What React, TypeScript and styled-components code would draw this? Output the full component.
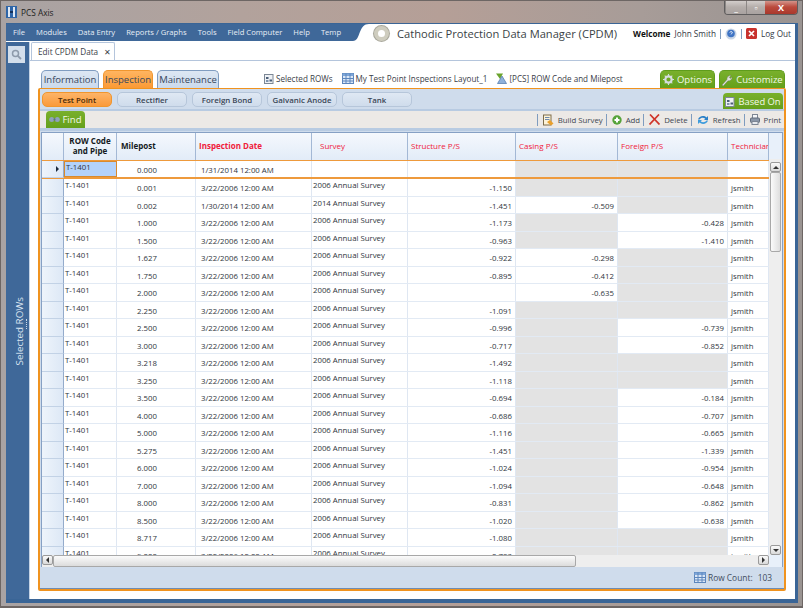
import React from 'react';
import styled, { createGlobalStyle } from 'styled-components';

const GlobalStyle = createGlobalStyle`
  html, body { margin: 0; padding: 0; background: #8f827e; }
  body { font-family: "Open Sans", "Noto Sans", sans-serif; color: #2b3440; }
`;

const Win = styled.div`
  width: 803px;
  height: 608px;
  box-sizing: border-box;
  padding: 0 4px 3px 5px;
  display: flex;
  flex-direction: column;
  overflow: hidden;
  background: linear-gradient(90deg, #a9a3a3 0%, #b2a29c 30%, #b59f97 55%, #a79c98 80%, #9a9492 100%);
  border: 1px solid #6d6664;
  border-bottom-width: 2px;
`;

const TitleBar = styled.div`
  height: 22px;
  flex: none;
  display: flex;
  align-items: center;
  font-size: 8.3px;
  color: #1d1d1d;
  gap: 4px;
  position: relative;
`;

const WinButtons = styled.div`
  position: absolute;
  right: 0;
  top: -1px;
  display: flex;
  height: 14px;
  border: 1px solid #5f5d5e;
  border-top: 0;
  border-radius: 0 0 4px 4px;
  overflow: hidden;
`;

const WinButton = styled.div<{ $w: number; $close?: boolean }>`
  width: ${p => p.$w}px;
  display: flex;
  align-items: center;
  justify-content: center;
  color: #fff;
  font-size: 9px;
  font-weight: 700;
  background: ${p => p.$close
    ? 'linear-gradient(#d8a097, #bb4a3c 50%, #a9382c)'
    : 'linear-gradient(#d7d2d0, #b5aeab 50%, #a9a2a0)'};
  border-left: ${p => p.$close ? 0 : '1px solid #8c8785'};
`;

const Frame = styled.div`
  flex: 1;
  min-height: 0;
  display: flex;
  flex-direction: column;
  background: #fff;
  border: 1px solid #3a6596;
  border-width: 1px 3px 4px 0;
`;

const HeaderBar = styled.div`
  height: 17px;
  flex: none;
  display: flex;
`;

const MenuBar = styled.div`
  width: 347px;
  flex: none;
  background: #3f6899;
  display: flex;
  align-items: center;
  padding-left: 7px;
  padding-bottom: 2px;
  box-sizing: border-box;
  gap: 11px;
  color: #e8eef6;
  font-size: 7.65px;
  white-space: nowrap;
`;

const Brand = styled.div`
  flex: 1;
  display: flex;
  align-items: center;
  background: #fff;
  position: relative;
  height: 19px;
`;

const Gear = styled.div`
  width: 15px;
  height: 15px;
  margin-left: 5px;
  flex: none;
  box-sizing: border-box;
  border-radius: 50%;
  border: 4px solid #cfcdbf;
  background: #fff;
  box-shadow: 0 0 0 1px #a9a89c;
`;

const AppTitle = styled.div`
  margin-left: 8px;
  font-size: 11.15px;
  color: #3a3f45;
  white-space: nowrap;
`;

const UserArea = styled.div`
  margin-left: auto;
  margin-right: 4px;
  display: flex;
  align-items: center;
  gap: 4px;
  font-size: 8.2px;
  white-space: nowrap;
  color: #33383f;
`;

const Welcome = styled.b`
  color: #111;
  margin-right: 2px;
`;

const Pipe = styled.span`
  width: 1px;
  height: 10px;
  background: #7f9cbf;
`;

const Body = styled.div`
  flex: 1;
  min-height: 0;
  display: flex;
`;

const SideBar = styled.div`
  width: 24px;
  flex: none;
  margin-top: 1px;
  background: #3f6899;
  border-right: 1px solid #c5d3e5;
  box-sizing: border-box;
  display: flex;
  flex-direction: column;
  align-items: center;
  position: relative;
`;

const SearchBox = styled.div`
  width: 17px;
  height: 17px;
  margin: 4px 2px 0 0;
  background: #d3deeb;
  display: flex;
  align-items: center;
  justify-content: center;
`;

const SideLabel = styled.div`
  position: absolute;
  left: 7px;
  top: 255px;
  writing-mode: vertical-rl;
  transform: rotate(180deg);
  color: #dbe5f1;
  font-size: 9.8px;
  white-space: nowrap;
`;

const SideDots = styled.div`
  position: absolute;
  left: 20px;
  top: 277px;
  height: 10px;
  border-left: 1px dotted #cdd9e8;
`;

const Content = styled.div`
  flex: 1;
  min-width: 0;
  display: flex;
  flex-direction: column;
`;

const DocTabs = styled.div`
  height: 18px;
  flex: none;
  margin-top: 1px;
  border-bottom: 1px solid #b4c5dc;
`;

const DocTab = styled.div`
  width: 84px;
  height: 18px;
  margin-left: 1px;
  box-sizing: border-box;
  padding-left: 6px;
  display: flex;
  align-items: center;
  gap: 6px;
  background: #fff;
  border: 1px solid #b4c5dc;
  border-bottom: 0;
  border-radius: 2px 2px 0 0;
  font-size: 8.2px;
  color: #3a4048;
`;

const TopRow = styled.div`
  height: 18px;
  margin: 9px 10px 0 11px;
  flex: none;
  display: flex;
  align-items: flex-end;
`;

const MainTab = styled.div<{ $w: number; $state?: 'on' | 'green' }>`
  width: ${p => p.$w}px;
  height: 18px;
  margin-right: 4px;
  box-sizing: border-box;
  display: flex;
  align-items: center;
  justify-content: center;
  gap: 3px;
  font-size: 9.5px;
  border-radius: 5px 5px 0 0;
  white-space: nowrap;
  border: 1px solid ${p => p.$state === 'on' ? '#f0962e' : p.$state === 'green' ? '#5f9c1c' : '#7f9cc0'};
  border-bottom: 0;
  color: ${p => p.$state === 'green' ? '#f2f8e8' : '#37475c'};
  background: ${p => p.$state === 'on'
    ? 'linear-gradient(#ffb561, #fb9a35)'
    : p.$state === 'green'
      ? 'linear-gradient(#79b02c, #65a01b)'
      : 'linear-gradient(#dde7f3, #cbdaec)'};
`;

const Crumbs = styled.div`
  margin-left: 41px;
  height: 17px;
  align-self: flex-start;
  display: flex;
  align-items: center;
  font-size: 8.1px;
  color: #3a4048;
  white-space: nowrap;
`;

const Crumb = styled.span`
  display: inline-flex;
  align-items: center;
  gap: 2px;
  margin-right: 9px;
`;

const TopRight = styled.div`
  margin-left: auto;
  display: flex;
  margin-right: -4px;
`;

const Panel = styled.div`
  flex: 1;
  min-height: 0;
  margin: 0 9px 8px 8px;
  border: 1px solid #f0931f;
  border-width: 1px 2px 2px 2px;
  border-radius: 2px;
  background: #cfdcec;
  display: flex;
  flex-direction: column;
  box-sizing: border-box;
`;

const SubBar = styled.div`
  height: 22px;
  box-sizing: border-box;
  flex: none;
  display: flex;
  align-items: flex-end;
  padding-left: 2px;
  gap: 5px;
  position: relative;
  border-bottom: 2px solid #b8cbe2;
`;

const SubTab = styled.div<{ $on?: boolean }>`
  width: 70px;
  height: 15px;
  margin-bottom: 2px;
  box-sizing: border-box;
  display: flex;
  align-items: center;
  justify-content: center;
  font-size: 7.9px;
  font-weight: 600;
  color: ${p => p.$on ? '#4a2a08' : '#3a4656'};
  border-radius: 5px;
  border: 1px solid ${p => p.$on ? '#f0962e' : '#b6c6da'};
  background: ${p => p.$on ? 'linear-gradient(#fdb468, #fa9a3a)' : 'linear-gradient(#dfe8f3, #cfdcec)'};
`;

const BasedOn = styled.div`
  margin-left: auto;
  margin-right: 1px;
  width: 60px;
  height: 16px;
  box-sizing: border-box;
  display: flex;
  align-items: center;
  justify-content: center;
  gap: 3px;
  border-radius: 4px 4px 0 0;
  background: linear-gradient(#79b02c, #65a01b);
  color: #f2f8e8;
  font-size: 9.4px;
`;

const ToolBar = styled.div`
  height: 20px;
  box-sizing: border-box;
  flex: none;
  display: flex;
  align-items: flex-end;
  background: #ece9e6;
  padding: 0 0 0 6px;
  border-bottom: 3px solid #b8cbe2;
  font-size: 7.8px;
  color: #3e4650;
`;

const FindTab = styled.div`
  width: 39px;
  height: 17px;
  box-sizing: border-box;
  display: flex;
  align-items: center;
  justify-content: center;
  gap: 2px;
  border-radius: 4px 4px 0 0;
  background: linear-gradient(#79b02c, #65a01b);
  color: #f2f8e8;
  font-size: 9.6px;
`;

const Actions = styled.div`
  margin-left: auto;
  height: 17px;
  display: flex;
  align-items: center;
`;

const Action = styled.div`
  display: flex;
  align-items: center;
  gap: 4px;
  height: 12px;
  padding: 0 3px 0 5px;
  border-left: 1px solid #7f9cbf;
  white-space: nowrap;
`;

const GridWrap = styled.div`
  margin: 1px 1px 0 1px;
  flex: none;
  border: 1px solid #86a0c4;
  border-bottom: 0;
  background: #e8f0fa;
`;

const Main = styled.div`
  display: flex;
  height: 422px;
`;

const Rows = styled.div`
  width: 727px;
  flex: none;
  overflow: hidden;
`;

const columns = '22px 53px 79px 116px 96px 108px 102px 110px 41px';

const HeadRow = styled.div`
  display: grid;
  grid-template-columns: ${columns};
  height: 26.5px;
  background: linear-gradient(#f5f8fd, #e2ecf8);
  box-sizing: border-box;
`;

const HeadCell = styled.div<{ $req?: boolean; $strong?: boolean; $center?: boolean; $pad?: number }>`
  display: flex;
  align-items: center;
  box-sizing: border-box;
  overflow: hidden;
  white-space: ${p => p.$center ? 'normal' : 'nowrap'};
  justify-content: ${p => p.$center ? 'center' : 'flex-start'};
  text-align: ${p => p.$center ? 'center' : 'left'};
  line-height: 10.5px;
  padding-left: ${p => p.$pad ?? 3}px;
  font-size: 8px;
  font-weight: ${p => (p.$req && !p.$strong) ? 500 : 700};
  color: ${p => p.$req ? '#f0203a' : '#141a22'};
  border-right: 1px solid #a3b8d5;
`;

const DataRow = styled.div<{ $sel?: boolean }>`
  display: grid;
  grid-template-columns: ${columns};
  height: ${p => p.$sel ? 19.5 : 17.5}px;
  box-sizing: border-box;
  background: #fff;
  font-size: 7.8px;
  color: #2f353c;
  border-top: ${p => p.$sel ? '1px solid #ee9a3c' : 0};
  border-bottom: ${p => p.$sel ? '2px solid #ee9a3c' : '1px solid #e2eaf4'};
`;

const RowHead = styled.div`
  background: linear-gradient(90deg, #eef4fb, #dde8f6);
  border-right: 1px solid #94abcb;
  border-bottom: 1px solid #c2d2e6;
  display: flex;
  align-items: center;
  justify-content: flex-end;
  padding-right: 4px;
  margin-bottom: -1px;
`;

const Arrow = styled.span`
  width: 0;
  height: 0;
  border-left: 3px solid #1c2a3c;
  border-top: 3px solid transparent;
  border-bottom: 3px solid transparent;
`;

const Cell = styled.div<{ $align?: 'left' | 'right'; $top?: boolean; $grey?: boolean; $current?: boolean; $pad?: number }>`
  box-sizing: border-box;
  overflow: hidden;
  white-space: nowrap;
  padding: ${p => p.$top ? '1px 1px 0 1px' : `4px 3px 0 ${p.$pad ?? 3}px`};
  line-height: 11px;
  text-align: ${p => p.$align ?? 'left'};
  border-right: 1px solid #dfe7f2;
  background: ${p => p.$grey ? '#e3e3e3' : p.$current ? '#b3d2fb' : 'transparent'};
  ${p => p.$current ? 'border: 1.5px solid #d98a2e; padding: 0 1px;' : ''}
`;

const VScroll = styled.div`
  width: 13px;
  flex: none;
  background: #eeeeee;
  margin-top: 26px;
  padding-top: 3px;
  box-sizing: border-box;
  display: flex;
  flex-direction: column;
  align-items: center;
`;

const ScrollBtn = styled.div`
  width: 11px;
  height: 10px;
  flex: none;
  box-sizing: border-box;
  border: 1px solid #9a9a9a;
  border-radius: 2px;
  background: linear-gradient(#fafafa, #d9d9d9);
  display: flex;
  align-items: center;
  justify-content: center;
`;

const VThumb = styled.div`
  width: 11px;
  height: 80px;
  flex: none;
  box-sizing: border-box;
  border: 1px solid #a8a8a8;
  border-radius: 2px;
  background: linear-gradient(90deg, #fbfbfb, #dedede);
`;

const VSpacer = styled.div`
  flex: 1;
`;

const HScroll = styled.div`
  display: flex;
  align-items: stretch;
  height: 12px;
`;

const HTrack = styled.div`
  width: 727px;
  display: flex;
  background: #eeeeee;
  align-items: stretch;
`;

const HThumb = styled.div`
  width: 523px;
  box-sizing: border-box;
  border: 1px solid #a8a8a8;
  border-radius: 2px;
  background: linear-gradient(#fbfbfb, #dcdcdc);
`;

const HSpace = styled.div`
  flex: 1;
`;

const Status = styled.div`
  flex: 1;
  min-height: 0;
  display: flex;
  align-items: center;
  justify-content: flex-end;
  gap: 2px;
  padding-right: 12px;
  font-size: 8.4px;
  color: #3f4c5e;
  border-bottom: 1px solid #6f8db4;
`;

const CountText = styled.span`
  margin-right: 3px;
`;

const TriLeft = styled.span`
  border-right: 3px solid #333;
  border-top: 3px solid transparent;
  border-bottom: 3px solid transparent;
`;

const TriRight = styled.span`
  border-left: 3px solid #333;
  border-top: 3px solid transparent;
  border-bottom: 3px solid transparent;
`;

const TriUp = styled.span`
  border-bottom: 3px solid #333;
  border-left: 3px solid transparent;
  border-right: 3px solid transparent;
`;

const TriDown = styled.span`
  border-top: 3px solid #333;
  border-left: 3px solid transparent;
  border-right: 3px solid transparent;
`;

const GridIcon = () => (
  <svg width="12" height="11" viewBox="0 0 12 11">
    <rect x="0.5" y="0.5" width="11" height="10" fill="#dbe7f6" stroke="#5c86bd" />
    <rect x="0.5" y="0.5" width="11" height="2.5" fill="#7ea6d8" />
    <path d="M0.5 5.5h11M0.5 8h11M4 0.5v10M8 0.5v10" stroke="#5c86bd" fill="none" />
  </svg>
);

const PagesIcon = () => (
  <svg width="10" height="11" viewBox="0 0 10 11">
    <rect x="0.5" y="1.5" width="8.5" height="9" fill="#eef1f5" stroke="#7c8795" />
    <rect x="2" y="4" width="2.5" height="2" fill="#4b5f78" />
    <rect x="5.5" y="6.5" width="2.5" height="2" fill="#4b5f78" />
    <rect x="2" y="7" width="2.5" height="2" fill="#7f93ab" />
  </svg>
);

const FilterIcon = () => (
  <svg width="11" height="11" viewBox="0 0 11 11">
    <path d="M0 0.5h7L4 6z" fill="#6aa32d" />
    <path d="M6 3l4.5 7.5h-9z" fill="#8fb1da" stroke="#4d77aa" strokeWidth="0.7" />
  </svg>
);

const BuildIcon = () => (
  <svg width="11" height="12" viewBox="0 0 11 12">
    <rect x="0.5" y="1" width="7.5" height="10" fill="#fdf3d8" stroke="#7c6c4a" />
    <path d="M2 3.5h4.5M2 5.5h4.5" stroke="#6e89ad" />
    <path d="M4 8l3-2 3.5 3.5-2.5 2z" fill="#e9a02c" />
  </svg>
);

const AddIcon = () => (
  <svg width="10" height="10" viewBox="0 0 10 10">
    <circle cx="5" cy="5" r="4.7" fill="#56a33a" />
    <path d="M2.5 5h5M5 2.5v5" stroke="#fff" strokeWidth="2" />
  </svg>
);

const DeleteIcon = () => (
  <svg width="11" height="11" viewBox="0 0 11 11">
    <path d="M1 0.5l9.5 10M10 0.5L0.5 10.5" stroke="#d0352a" strokeWidth="1.7" fill="none" />
  </svg>
);

const RefreshIcon = () => (
  <svg width="12" height="10" viewBox="0 0 12 10">
    <path d="M1 4.5C2 1 7 0 9.5 2.5L11 1v4H7l1.3-1.3C6.5 2.2 3.5 2.8 2.6 4.5z" fill="#2a80c8" />
    <path d="M11 5.5C10 9 5 10 2.5 7.5L1 9V5h4L3.7 6.3c1.8 1.5 4.8 0.9 5.7-0.8z" fill="#3d9bdc" />
  </svg>
);

const PrintIcon = () => (
  <svg width="10" height="11" viewBox="0 0 10 11">
    <rect x="2.5" y="0.5" width="5" height="4" fill="#f4f6f9" stroke="#7d8694" />
    <rect x="0.5" y="4" width="9" height="4.5" rx="1" fill="#8b97a8" stroke="#626d7c" />
    <rect x="2" y="7.5" width="6" height="3" fill="#e6e9ee" stroke="#7d8694" />
  </svg>
);

const WrenchIcon = () => (
  <svg width="12" height="12" viewBox="0 0 12 12">
    <path d="M1 11l5-5.5C5.6 3.5 7.5 1 10 1.5L8.3 3.5l1 1L11 3c.3 2.5-2 4.3-4 3.8L2.2 12z" fill="#dfe3dc" stroke="#69705f" strokeWidth="0.4" />
  </svg>
);

const CogIcon = () => (
  <svg width="11" height="11" viewBox="0 0 11 11">
    <circle cx="5.5" cy="5.5" r="3.2" fill="none" stroke="#d6dde0" strokeWidth="2.2" />
    <path d="M5.5 0v11M0 5.5h11M1.7 1.7l7.6 7.6M9.3 1.7l-7.6 7.6" stroke="#d6dde0" strokeWidth="1.1" strokeDasharray="1.8 7.4" />
  </svg>
);

const LensIcon = () => (
  <svg width="11" height="11" viewBox="0 0 11 11">
    <circle cx="4.5" cy="4.5" r="3" fill="none" stroke="#8d9aab" strokeWidth="1.5" />
    <path d="M6.8 6.8L10 10" stroke="#8d9aab" strokeWidth="1.8" />
  </svg>
);

const BinocIcon = () => (
  <svg width="11" height="7" viewBox="0 0 11 7">
    <circle cx="2.7" cy="3.5" r="2.5" fill="#8ea2ba" />
    <circle cx="8.3" cy="3.5" r="2.5" fill="#8ea2ba" />
    <rect x="4.5" y="2.5" width="2" height="2" fill="#5f7086" />
  </svg>
);

const HelpIcon = () => (
  <svg width="12" height="12" viewBox="0 0 12 12">
    <circle cx="6" cy="6" r="5.5" fill="#c8d5e6" />
    <circle cx="6" cy="5.5" r="3.8" fill="#3f74c4" />
    <path d="M4.8 4.5c.3-1.2 2.5-1.2 2.5.1 0 .9-1.2 .9-1.2 1.8" stroke="#fff" strokeWidth="0.9" fill="none" />
  </svg>
);

const LogoutIcon = () => (
  <svg width="11" height="11" viewBox="0 0 11 11">
    <rect width="11" height="11" rx="1.5" fill="#c8322d" />
    <path d="M3 3l5 5M8 3l-5 5" stroke="#fff" strokeWidth="1.7" />
  </svg>
);

const AppLogo = () => (
  <svg width="11" height="12" viewBox="0 0 11 12">
    <rect width="11" height="12" fill="#2f66a8" />
    <rect x="2" y="1" width="2" height="10" fill="#dfe9f5" />
    <rect x="7" y="1" width="2" height="10" fill="#dfe9f5" />
    <rect x="4" y="5" width="3" height="2" fill="#12305c" />
  </svg>
);

const HeaderCurve = () => (
  <svg width="16" height="19" viewBox="0 0 16 19" style={{ flex: 'none', display: 'block' }}>
    <rect width="16" height="19" fill="#fff" />
    <path d="M0 0H16C11 0 9 3 6.5 9C5 14 3 17 0 17z" fill="#3f6899" />
  </svg>
);

type Row = {
  mp: string;
  date?: string;
  survey?: string;
  st?: string;
  cas?: string;
  fo?: string;
};

const A = '3/22/2006 12:00 AM';
const S = '2006 Annual Survey';

const rows: Row[] = [
  { mp: '0.001', st: '-1.150' },
  { mp: '0.002', date: '1/30/2014 12:00 AM', survey: '2014 Annual Survey', st: '-1.451', cas: '-0.509' },
  { mp: '1.000', st: '-1.173', fo: '-0.428' },
  { mp: '1.500', st: '-0.963', fo: '-1.410' },
  { mp: '1.627', st: '-0.922', cas: '-0.298' },
  { mp: '1.750', st: '-0.895', cas: '-0.412' },
  { mp: '2.000', cas: '-0.635' },
  { mp: '2.250', st: '-1.091' },
  { mp: '2.500', st: '-0.996', fo: '-0.739' },
  { mp: '3.000', st: '-0.717', fo: '-0.852' },
  { mp: '3.218', st: '-1.492' },
  { mp: '3.250', st: '-1.118' },
  { mp: '3.500', st: '-0.694', fo: '-0.184' },
  { mp: '4.000', st: '-0.686', fo: '-0.707' },
  { mp: '5.000', st: '-1.116', fo: '-0.665' },
  { mp: '5.275', st: '-1.451', fo: '-1.339' },
  { mp: '6.000', st: '-1.024', fo: '-0.954' },
  { mp: '7.000', st: '-1.094', fo: '-0.648' },
  { mp: '8.000', st: '-0.831', fo: '-0.862' },
  { mp: '8.500', st: '-1.020', fo: '-0.638' },
  { mp: '8.717', st: '-1.080' },
  { mp: '9.000', st: '-0.783' },
];

const menus = ['File', 'Modules', 'Data Entry', 'Reports / Graphs', 'Tools', 'Field Computer', 'Help', 'Temp'];
const subTabs = ['Test Point', 'Rectifier', 'Foreign Bond', 'Galvanic Anode', 'Tank'];

const App: React.FC = () => {
  return (
    <Win>
      <GlobalStyle />
      <TitleBar>
        <AppLogo />
        PCS Axis
        <WinButtons>
          <WinButton $w={20}>_</WinButton>
          <WinButton $w={18}>▫</WinButton>
          <WinButton $w={32} $close>X</WinButton>
        </WinButtons>
      </TitleBar>
      <Frame>
        <HeaderBar>
          <MenuBar>
            {menus.map(m => <span key={m}>{m}</span>)}
          </MenuBar>
          <HeaderCurve />
          <Brand>
            <Gear />
            <AppTitle>Cathodic Protection Data Manager (CPDM)</AppTitle>
            <UserArea>
              <span><Welcome>Welcome</Welcome> John Smith</span>
              <Pipe />
              <HelpIcon />
              <Pipe />
              <LogoutIcon />
              <span>Log Out</span>
            </UserArea>
          </Brand>
        </HeaderBar>
        <Body>
          <SideBar>
            <SearchBox><LensIcon /></SearchBox>
            <SideLabel>Selected ROWs</SideLabel>
            <SideDots />
          </SideBar>
          <Content>
            <DocTabs>
              <DocTab>Edit CPDM Data <span>✕</span></DocTab>
            </DocTabs>
            <TopRow>
              <MainTab $w={58}>Information</MainTab>
              <MainTab $w={50} $state="on">Inspection</MainTab>
              <MainTab $w={62}>Maintenance</MainTab>
              <Crumbs>
                <Crumb><PagesIcon /> Selected ROWs</Crumb>
                <Crumb><GridIcon /> My Test Point Inspections Layout_1</Crumb>
                <Crumb><FilterIcon /> [PCS] ROW Code and Milepost</Crumb>
              </Crumbs>
              <TopRight>
                <MainTab $w={55} $state="green"><CogIcon /> Options</MainTab>
                <MainTab $w={66} $state="green"><WrenchIcon /> Customize</MainTab>
              </TopRight>
            </TopRow>
            <Panel>
              <SubBar>
                {subTabs.map((t, i) => <SubTab key={t} $on={i === 0}>{t}</SubTab>)}
                <BasedOn><PagesIcon /> Based On</BasedOn>
              </SubBar>
              <ToolBar>
                <FindTab><BinocIcon /> Find</FindTab>
                <Actions>
                  <Action><BuildIcon /> Build Survey</Action>
                  <Action><AddIcon /> Add</Action>
                  <Action><DeleteIcon /> Delete</Action>
                  <Action><RefreshIcon /> Refresh</Action>
                  <Action><PrintIcon /> Print</Action>
                </Actions>
              </ToolBar>
              <GridWrap>
                <Main>
                  <Rows>
                    <HeadRow>
                      <HeadCell />
                      <HeadCell $center $pad={0}>ROW Code and Pipe</HeadCell>
                      <HeadCell $pad={4}>Milepost</HeadCell>
                      <HeadCell $req $strong>Inspection Date</HeadCell>
                      <HeadCell $req $pad={8}>Survey</HeadCell>
                      <HeadCell $req>Structure P/S</HeadCell>
                      <HeadCell $req>Casing P/S</HeadCell>
                      <HeadCell $req>Foreign P/S</HeadCell>
                      <HeadCell $req>Technician</HeadCell>
                    </HeadRow>
                    <DataRow $sel>
                      <RowHead><Arrow /></RowHead>
                      <Cell $current>T-1401</Cell>
                      <Cell $pad={20}>0.000</Cell>
                      <Cell $pad={5}>1/31/2014 12:00 AM</Cell>
                      <Cell />
                      <Cell />
                      <Cell $grey />
                      <Cell $grey />
                      <Cell />
                    </DataRow>
                    {rows.map(r => (
                      <DataRow key={r.mp}>
                        <RowHead />
                        <Cell $top>T-1401</Cell>
                        <Cell $pad={20}>{r.mp}</Cell>
                        <Cell $pad={5}>{r.date ?? A}</Cell>
                        <Cell $top>{r.survey ?? S}</Cell>
                        <Cell $align="right">{r.st}</Cell>
                        <Cell $align="right" $grey={!r.cas}>{r.cas}</Cell>
                        <Cell $align="right" $grey={!r.fo}>{r.fo}</Cell>
                        <Cell>jsmith</Cell>
                      </DataRow>
                    ))}
                  </Rows>
                  <VScroll>
                    <ScrollBtn><TriUp /></ScrollBtn>
                    <VThumb />
                    <VSpacer />
                    <ScrollBtn><TriDown /></ScrollBtn>
                  </VScroll>
                </Main>
                <HScroll>
                  <HTrack>
                    <ScrollBtn><TriLeft /></ScrollBtn>
                    <HThumb />
                    <HSpace />
                    <ScrollBtn><TriRight /></ScrollBtn>
                  </HTrack>
                </HScroll>
              </GridWrap>
              <Status>
                <GridIcon />
                <CountText>Row Count:</CountText> 103
              </Status>
            </Panel>
          </Content>
        </Body>
      </Frame>
    </Win>
  );
};

export default App;
